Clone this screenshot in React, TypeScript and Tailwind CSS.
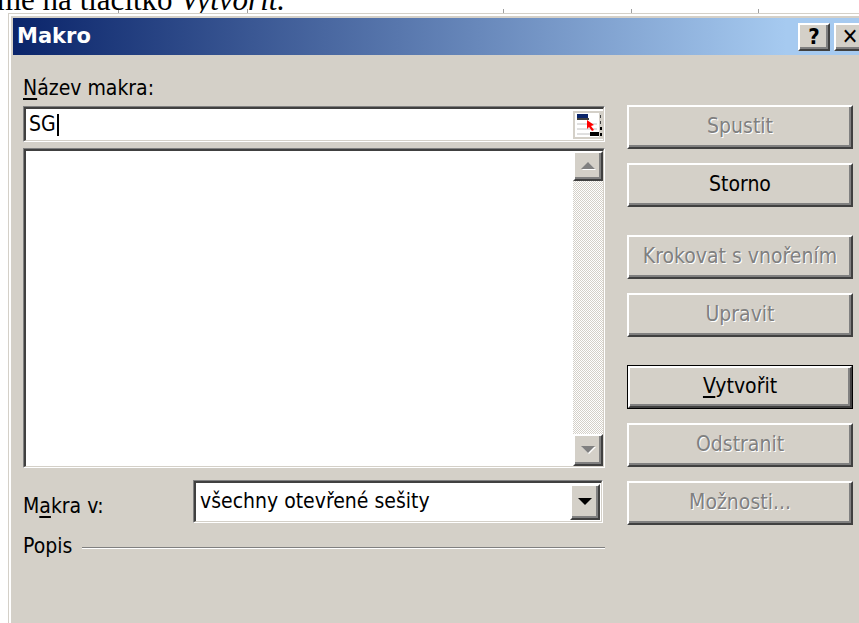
import clsx from "clsx"
import type { ReactNode } from "react"

const ui = "font-['DejaVu_Sans_Condensed','DejaVu_Sans',sans-serif]"

// classic 3D edges
const raised =
  "border-t-2 border-l-2 border-t-white border-l-white border-r-2 border-b-2 border-r-[#404040] border-b-[#404040] shadow-[inset_-2px_-2px_0_#808080]"

function Sunken({ className, children }: { className?: string; children?: ReactNode }) {
  return (
    <div
      className={clsx(
        "border-t border-l border-t-[#808080] border-l-[#808080] border-r border-b border-r-white border-b-white",
        className
      )}
    >
      <div className="h-full w-full flex border-t-2 border-l-2 border-t-[#404040] border-l-[#404040] border-r border-b border-r-[#d4d0c8] border-b-[#d4d0c8] bg-white">
        {children}
      </div>
    </div>
  )
}

function Arrow({ up, disabled }: { up?: boolean; disabled?: boolean }) {
  const pts = up ? "1,7 8,0 15,7" : "1,0 8,7 15,0"
  return (
    <svg width="17" height="9" viewBox="0 0 17 9">
      {disabled && <polygon points={up ? "2,8 9,1 16,8" : "2,1 9,8 16,1"} fill="#fff" />}
      <polygon points={pts} fill={disabled ? "#808080" : "#000"} />
    </svg>
  )
}

function ScrollBtn({ up, disabled, className }: { up?: boolean; disabled?: boolean; className?: string }) {
  return (
    <div className={clsx("bg-[#d4d0c8] flex items-center justify-center", raised, className)}>
      <Arrow up={up} disabled={disabled} />
    </div>
  )
}

function RefEditIcon() {
  return (
    <svg width="30" height="28" viewBox="0 0 30 28">
      <rect x="0" y="0" width="30" height="28" fill="#d4d0c8" />
      <rect x="2" y="2" width="24" height="24" fill="#fff" />
      <rect x="4" y="3" width="11" height="4" fill="#0a246a" />
      <rect x="4" y="7" width="12" height="2" fill="#404040" />
      <line x1="4" y1="13" x2="24" y2="13" stroke="#c0c0c0" strokeWidth="1" />
      <line x1="4" y1="18" x2="24" y2="18" stroke="#c0c0c0" strokeWidth="1" />
      <line x1="4" y1="23" x2="17" y2="23" stroke="#c0c0c0" strokeWidth="1" />
      <rect x="17" y="21" width="9" height="4" fill="#000" />
      <rect x="27" y="4" width="1" height="3" fill="#404040" />
      <rect x="27" y="10" width="1" height="3" fill="#404040" />
      <rect x="27" y="16" width="2" height="3" fill="#000" />
      <rect x="27" y="22" width="2" height="3" fill="#000" />
      <polygon points="14,9 14,18 16,16 19,20 21,19 18,15 21,14" fill="#ff0000" />
    </svg>
  )
}

function DlgButton({
  label,
  disabled,
  isDefault,
  className,
}: {
  label: ReactNode
  disabled?: boolean
  isDefault?: boolean
  className?: string
}) {
  const body = (
    <div
      className={clsx(
        "h-full w-full flex items-center justify-center bg-[#d4d0c8] text-[21px]",
        raised,
        disabled ? "text-[#808080] [text-shadow:1px_1px_0_#fff]" : "text-black"
      )}
    >
      {label}
    </div>
  )
  return (
    <div className={clsx("h-[44px] w-[226px]", isDefault && "border border-black", className)}>{body}</div>
  )
}

function TitleBtn({ children }: { children: ReactNode }) {
  return (
    <div
      className={clsx(
        "w-[32px] h-[28px] bg-[#d4d0c8] flex items-center justify-center text-[22px] font-bold text-black leading-none",
        raised
      )}
    >
      {children}
    </div>
  )
}

export default function App() {
  return (
    <div className={clsx("w-[859px] h-[623px] overflow-hidden bg-white", ui)}>
      {/* sheet text above the dialog */}
      <div className="relative h-[13px] overflow-hidden">
        {[118, 247, 503, 631, 758].map((x) => (
          <div key={x} className="absolute top-[9px] h-[4px] w-px bg-[#a0a0a0]" style={{ left: x }} />
        ))}
        <div className="relative -mt-[16px] -ml-[3px] whitespace-nowrap text-[31px] leading-none text-black font-['Liberation_Serif',serif]">
          me na tlačítko <span className="italic">Vytvořit.</span>
        </div>
      </div>

      {/* dialog window */}
      <div className="ml-[8px] w-[864px] h-[620px] bg-[#d4d0c8] border-t border-l border-[#d4d0c8] shadow-[inset_2px_2px_0_#fff] pt-[4px] pl-[4px] flex flex-col">
        <div className="h-[37px] flex items-center justify-between bg-[linear-gradient(to_right,#0a246a,#a6caf0_90%)] pl-[4px] pr-[6px]">
          <span className="text-white font-bold text-[21px] font-['DejaVu_Sans',sans-serif]">Makro</span>
          <div className="flex gap-[4px]">
            <TitleBtn>?</TitleBtn>
            <TitleBtn>✕</TitleBtn>
          </div>
        </div>

        <div className="flex pl-[10px] text-[21px] text-black">
          {/* left side */}
          <div className="w-[582px] flex flex-col">
            <div className="mt-[22px] h-[24px] leading-[22px]">
              <span className="underline underline-offset-[3px]">N</span>ázev makra:
            </div>
            <Sunken className="mt-[5px] h-[36px]">
              <div className="flex-1 flex items-center pl-[3px]">
                SG<span className="ml-[1px] w-[2px] h-[22px] bg-black" />
              </div>
              <div className="self-center">
                <RefEditIcon />
              </div>
            </Sunken>

            <Sunken className="mt-[6px] h-[320px]">
              <div className="flex-1" />
              <div className="w-[30px] flex flex-col">
                <ScrollBtn up disabled className="h-[30px]" />
                <div className="flex-1 bg-[repeating-conic-gradient(#fff_0_25%,#d4d0c8_0_50%)] bg-[length:2px_2px]" />
                <ScrollBtn disabled className="h-[32px]" />
              </div>
            </Sunken>

            <div className="mt-[12px] flex items-center">
              <div className="w-[170px] pt-[10px]">
                M<span className="underline underline-offset-[3px]">a</span>kra v:
              </div>
              <Sunken className="w-[410px] h-[43px]">
                <div className="flex-1 flex items-center pl-[4px]">všechny otevřené sešity</div>
                <ScrollBtn className="w-[30px] my-[1px] mr-[1px]" />
              </Sunken>
            </div>

            <div className="mt-[8px] flex items-center">
              <span>Popis</span>
              <div className="ml-[10px] flex-1 border-t border-t-[#808080] border-b border-b-white mt-[2px]" />
            </div>
          </div>

          {/* right side buttons */}
          <div className="ml-[22px] mt-[50px] flex flex-col">
            <DlgButton label="Spustit" disabled />
            <DlgButton label="Storno" className="mt-[14px]" />
            <DlgButton label="Krokovat s vnořením" disabled className="mt-[28px]" />
            <DlgButton label="Upravit" disabled className="mt-[14px]" />
            <DlgButton
              label={
                <span>
                  <span className="underline underline-offset-[3px]">V</span>ytvořit
                </span>
              }
              isDefault
              className="mt-[28px]"
            />
            <DlgButton label="Odstranit" disabled className="mt-[14px]" />
            <DlgButton label="Možnosti..." disabled className="mt-[14px]" />
          </div>
        </div>
      </div>
    </div>
  )
}
